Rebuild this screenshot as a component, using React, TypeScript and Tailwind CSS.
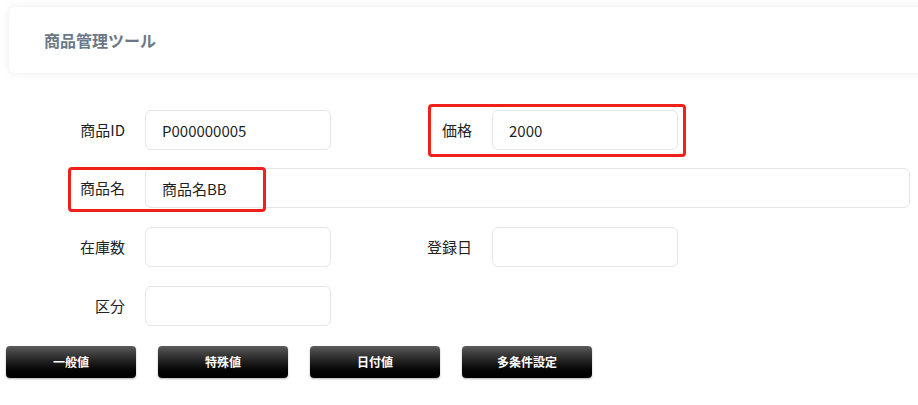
import React from 'react';

const FONT = "font-['Noto_Sans_CJK_JP','Noto_Sans',sans-serif]";

const Field: React.FC<{ value?: string; wide?: boolean }> = ({ value = '', wide }) => (
    <input
        readOnly
        value={value}
        className={`${wide ? 'w-[765px]' : 'w-[186px]'} h-10 rounded-md border border-[#e3e6ea] bg-white px-4 text-[15px] text-[#1f1f1f] outline-none`}
    />
);

const Label: React.FC<{ text: string; w: string }> = ({ text, w }) => (
    <div className={`${w} shrink-0 pr-5 text-right text-[15px] text-[#222]`}>{text}</div>
);

const BUTTONS = ['一般値', '特殊値', '日付値', '多条件設定'];

const App: React.FC = () => {
    return (
        <div className={`relative h-[405px] w-[918px] overflow-hidden bg-white ${FONT}`}>
            {/* Header */}
            <div className="ml-[9px] mt-[7px] flex h-[66px] w-[930px] items-center rounded-md bg-white pl-[35px] shadow-[0_0_8px_rgba(0,0,0,0.08)]">
                <h1 className="text-[16px] font-bold text-[#6b7888]">商品管理ツール</h1>
            </div>

            {/* Form */}
            <div className="mt-[37px] flex flex-col gap-[18px]">
                <div className="flex items-center">
                    <Label text="商品ID" w="w-[145px]" />
                    <Field value="P000000005" />
                    <Label text="価格" w="w-[161px]" />
                    <Field value="2000" />
                </div>
                <div className="flex items-center">
                    <Label text="商品名" w="w-[145px]" />
                    <Field value="商品名BB" wide />
                </div>
                <div className="mt-px flex items-center">
                    <Label text="在庫数" w="w-[145px]" />
                    <Field />
                    <Label text="登録日" w="w-[161px]" />
                    <Field />
                </div>
                <div className="mt-px flex items-center">
                    <Label text="区分" w="w-[145px]" />
                    <Field />
                </div>
            </div>

            {/* Buttons */}
            <div className="ml-[6px] mt-5 flex gap-[22px]">
                {BUTTONS.map((b) => (
                    <button
                        key={b}
                        className="h-8 w-[130px] rounded-[4px] bg-gradient-to-b from-[#5c5c5c] to-[#000] text-[12px] font-bold text-white shadow-[0_1px_2px_rgba(0,0,0,0.3)]"
                    >
                        {b}
                    </button>
                ))}
            </div>

            {/* Annotation boxes */}
            <div className="pointer-events-none absolute left-[428px] top-[104px] h-[53px] w-[258px] rounded-[4px] border-[3px] border-[#f0201a]" />
            <div className="pointer-events-none absolute left-[68px] top-[167px] h-[45px] w-[198px] rounded-[4px] border-[3px] border-[#f0201a]" />
        </div>
    );
};

export default App;
